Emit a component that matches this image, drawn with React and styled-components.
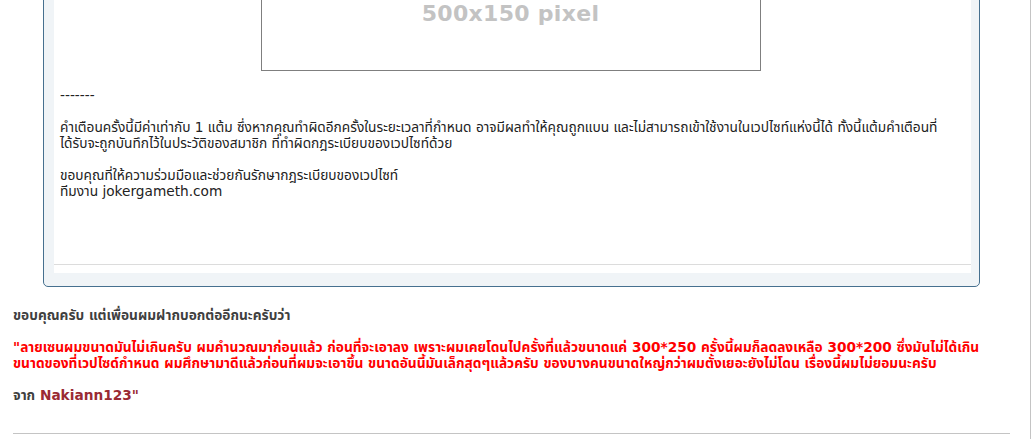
import React from "react";
import styled, { createGlobalStyle } from "styled-components";

const Global = createGlobalStyle`
  html, body { margin: 0; padding: 0; background: #ffffff; overflow: hidden; }
  body { font-family: Tahoma, "DejaVu Sans", "Noto Sans Thai", "Noto Sans", sans-serif; }
`;

const Page = styled.div`
  box-sizing: border-box;
  width: 1031px;
  margin-top: -100px;
  padding: 0 20px 1px 13px;
  border-right: 1px solid #c4c4c4;
`;

const QuoteBox = styled.div`
  margin: 0 30px;
  border: 1px solid #46708f;
  border-radius: 0 0 5px 5px;
  background: #f0f4f7;
  padding: 10px 8px 13px 10px;
`;

const QuotePanel = styled.div`
  background: #ffffff;
  display: flex;
  flex-direction: column;
`;

const QuoteBody = styled.div`
  padding: 9px 10px 65px 6px;
  display: flex;
  flex-direction: column;
`;

const Placeholder = styled.div`
  box-sizing: border-box;
  align-self: center;
  width: 500px;
  height: 151px;
  border: 1px solid #7f7f7f;
  display: flex;
  flex-direction: column;
  justify-content: flex-end;
  align-items: center;
  padding-bottom: 44px;
`;

const PlaceholderLabel = styled.span`
  font-family: "DejaVu Sans", sans-serif;
  font-weight: bold;
  font-size: 22px;
  color: #c3c3c3;
  letter-spacing: 0.3px;
`;

const QuoteText = styled.div`
  margin-top: 16px;
  font-size: 13.7px;
  line-height: 16px;
  color: #222222;
  white-space: nowrap;
`;

const QuoteFooter = styled.div`
  height: 8px;
  border-top: 1px solid #dcdcdc;
`;

const Message = styled.div`
  margin-top: 20px;
  font-size: 13.7px;
  line-height: 16px;
  font-weight: bold;
  color: #3f3f3f;
  white-space: nowrap;
`;

const Red = styled.span`
  color: ${(p) => (p.$tone === "dark" ? "#9a2a33" : "#ff0000")};
`;

const Rule = styled.div`
  margin-top: 30px;
  border-top: 1px solid #c4c4c4;
  height: 4px;
`;

export default function App() {
  return (
    <>
      <Global />
      <Page>
        <QuoteBox>
          <QuotePanel>
            <QuoteBody>
              <Placeholder>
                <PlaceholderLabel>500x150 pixel</PlaceholderLabel>
              </Placeholder>
              <QuoteText>
                -------
                <br />
                <br />
                คำเตือนครั้งนี้มีค่าเท่ากับ 1 แต้ม ซึ่งหากคุณทำผิดอีกครั้งในระยะเวลาที่กำหนด อาจมีผลทำให้คุณถูกแบน และไม่สามารถเข้าใช้งานในเวปไซท์แห่งนี้ได้ ทั้งนี้แต้มคำเตือนที่
                <br />
                ได้รับจะถูกบันทึกไว้ในประวัติของสมาชิก ที่ทำผิดกฎระเบียบของเวปไซท์ด้วย
                <br />
                <br />
                ขอบคุณที่ให้ความร่วมมือและช่วยกันรักษากฎระเบียบของเวปไซท์
                <br />
                ทีมงาน jokergameth.com
              </QuoteText>
            </QuoteBody>
            <QuoteFooter />
          </QuotePanel>
        </QuoteBox>
        <Message>
          ขอบคุณครับ แต่เพื่อนผมฝากบอกต่ออีกนะครับว่า
          <br />
          <br />
          <Red>
            "ลายเซนผมขนาดมันไม่เกินครับ ผมคำนวณมาก่อนแล้ว ก่อนที่จะเอาลง เพราะผมเคยโดนไปครั้งที่แล้วขนาดแค่ 300*250 ครั้งนี้ผมก็ลดลงเหลือ 300*200 ซึ่งมันไม่ได้เกิน
            <br />
            ขนาดของที่เวปไซด์กำหนด ผมศึกษามาดีแล้วก่อนที่ผมจะเอาขึ้น ขนาดอันนี้มันเล็กสุดๆแล้วครับ ของบางคนขนาดใหญ่กว่าผมตั้งเยอะยังไม่โดน เรื่องนี้ผมไม่ยอมนะครับ
          </Red>
          <br />
          <br />
          จาก <Red $tone="dark">Nakiann123"</Red>
        </Message>
        <Rule />
      </Page>
    </>
  );
}
